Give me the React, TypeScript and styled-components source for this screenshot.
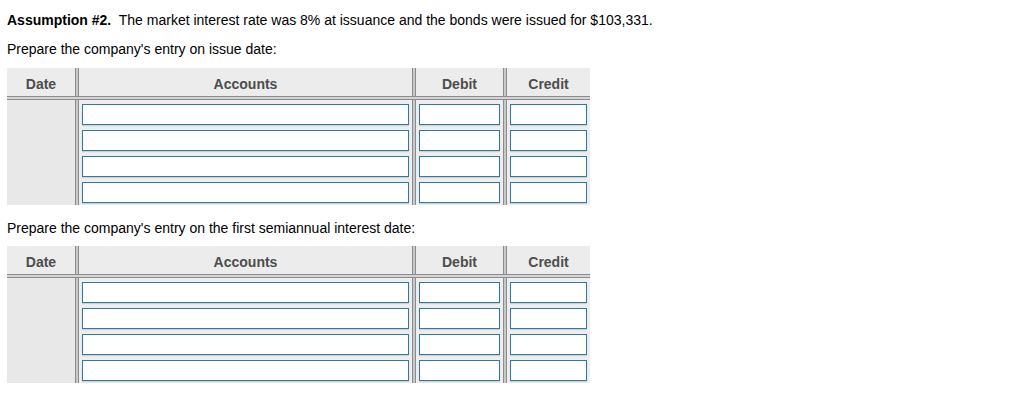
import React from "react";
import styled, { createGlobalStyle } from "styled-components";

const Global = createGlobalStyle`
  html, body { margin: 0; padding: 0; background: #fff; }
  body { font-family: "Liberation Sans", Arial, sans-serif; color: #000; }
`;

const Page = styled.div`
  padding: 12px 7px 0 7px;
  font-size: 14px;
`;

const Para = styled.p<{ $mt?: number }>`
  margin: ${(p) => p.$mt ?? 0}px 0 0 0;
  line-height: 17px;
`;

const Bold = styled.b`
  font-weight: bold;
`;

const Table = styled.div<{ $mt: number }>`
  margin-top: ${(p) => p.$mt}px;
  width: 583px;
  display: grid;
  grid-template-columns: 68px 4px 333px 4px 87px 4px 83px;
  background: #eeeeee;
`;

const HeadCell = styled.div`
  height: 28px;
  padding-top: 3px;
  box-sizing: border-box;
  display: flex;
  align-items: center;
  justify-content: center;
  font-weight: bold;
  color: #4d4d4d;
  font-size: 14px;
  background: #ececec;
`;

const VSep = styled.div`
  border-left: 1px solid #8c8c8c;
  border-right: 1px solid #8c8c8c;
  background: #c9c9c9;
`;

const HSep = styled.div`
  grid-column: 1 / -1;
  height: 4px;
  border-top: 1px solid #8c8c8c;
  border-bottom: 1px solid #8c8c8c;
  background: #d4d4d4;
  box-sizing: border-box;
`;

const DateCell = styled.div`
  background: #e8e8e8;
`;

const InputCol = styled.div`
  display: flex;
  flex-direction: column;
  padding: 4px 3px 2px 3px;
  gap: 5px;
`;

const Field = styled.input`
  display: block;
  box-sizing: border-box;
  width: 100%;
  height: 21px;
  margin: 0;
  border: 1.5px solid #2d7aa3;
  border-radius: 0;
  background: #fff;
  box-shadow: 0 1px 1px rgba(0, 0, 0, 0.12);
  outline: none;
`;

function Column({ rows }: { rows: number }) {
  return (
    <InputCol>
      {Array.from({ length: rows }).map((_, i) => (
        <Field key={i} type="text" />
      ))}
    </InputCol>
  );
}

function Journal({ mt }: { mt: number }) {
  return (
    <Table $mt={mt}>
      <HeadCell>Date</HeadCell>
      <VSep />
      <HeadCell>Accounts</HeadCell>
      <VSep />
      <HeadCell>Debit</HeadCell>
      <VSep />
      <HeadCell>Credit</HeadCell>
      <HSep />
      <DateCell />
      <VSep />
      <Column rows={4} />
      <VSep />
      <Column rows={4} />
      <VSep />
      <Column rows={4} />
    </Table>
  );
}

export default function App() {
  return (
    <>
      <Global />
      <Page>
        <Para>
          <Bold>Assumption #2.</Bold>&nbsp; The market interest rate was 8% at issuance and the bonds were issued for $103,331.
        </Para>
        <Para $mt={12}>Prepare the company's entry on issue date:</Para>
        <Journal mt={10} />
        <Para $mt={15}>Prepare the company's entry on the first semiannual interest date:</Para>
        <Journal mt={9} />
      </Page>
    </>
  );
}
